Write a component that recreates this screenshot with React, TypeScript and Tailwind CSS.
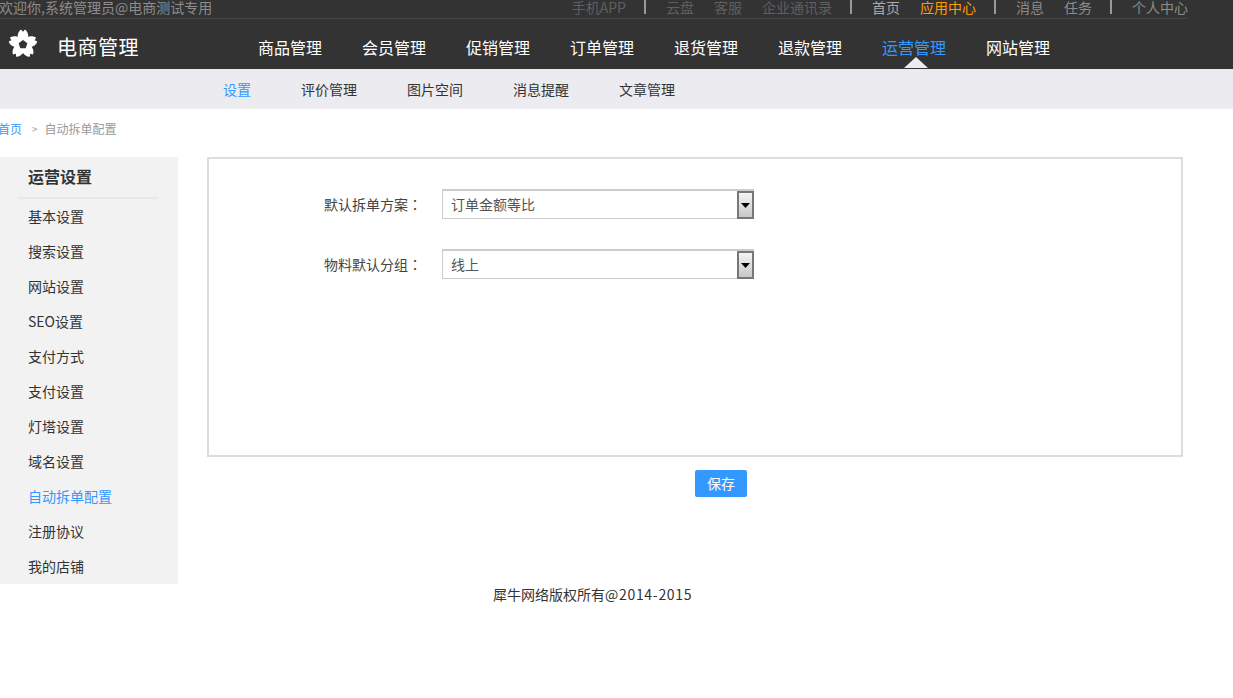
import React from "react";

const FONT = '"Noto Sans CJK SC", "Liberation Sans", sans-serif';

function Flower() {
  return (
    <svg width="30" height="30" viewBox="-15 -15 30 30" className="shrink-0">
      {[0, 72, 144, 216, 288].map((a) => (
        <g key={a} transform={`rotate(${a})`}>
          <path d="M0 -1 L-5 -5 C-6 -9 -4.6 -12.6 -2 -14.4 L0 -12.2 L2 -14.4 C4.6 -12.6 6 -9 5 -5 Z" fill="#fff" />
        </g>
      ))}
      <path d="M0 -4.6 L4.4 -1.4 L2.7 3.7 L-2.7 3.7 L-4.4 -1.4 Z" fill="#333" transform="translate(0 0.6)" />
    </svg>
  );
}

function Sep() {
  return <span className="w-[2px] h-[14px] -ml-[2px] bg-[#999]" />;
}

function Field({ label, value }: { label: string; value: string }) {
  return (
    <div className="flex items-center h-[30px]">
      <span className="w-[233px] pr-[20px] text-right text-[14px] text-[#444] whitespace-pre">
        {label}
        <span style={{ fontFamily: '"Noto Sans CJK TC", sans-serif' }}>：</span>
      </span>
      <div className="flex w-[312px] h-[30px] border border-t-2 border-r-0 border-[#ccc] bg-white">
        <span className="flex-1 pl-[8px] text-[14px] leading-[26px] text-[#555]">{value}</span>
        <span className="w-[17px] h-[28px] border-2 border-[#777] bg-gradient-to-b from-[#f4f4f4] to-[#c8c8c8] flex items-center justify-center">
          <svg width="9" height="5" viewBox="0 0 9 5"><path d="M0 0H9L4.5 5Z" fill="#000" /></svg>
        </span>
      </div>
    </div>
  );
}

const mainNav = ["商品管理", "会员管理", "促销管理", "订单管理", "退货管理", "退款管理", "运营管理", "网站管理"];
const subNav = ["设置", "评价管理", "图片空间", "消息提醒", "文章管理"];
const side = ["基本设置", "搜索设置", "网站设置", "SEO设置", "支付方式", "支付设置", "灯塔设置", "域名设置", "自动拆单配置", "注册协议", "我的店铺"];

export default function App() {
  return (
    <div className="min-h-[698px] bg-white overflow-hidden" style={{ fontFamily: FONT }}>
      <header className="bg-[#333] h-[69px]">
        <div className="w-[1188px] h-[19px] border-b border-[#454545] flex items-start justify-between text-[14px] leading-[14px]">
          <span className="-ml-[1px] text-[#8c8c8c]">欢迎你,系统管理员@电商测试专用</span>
          <div className="flex items-start gap-[20px] h-[14px]">
            <span className="text-[#5f5f5f]">手机APP</span>
            <Sep />
            <span className="text-[#5f5f5f]">云盘</span>
            <span className="text-[#5f5f5f]">客服</span>
            <span className="text-[#5f5f5f]">企业通讯录</span>
            <Sep />
            <span className="text-[#aaa]">首页</span>
            <span className="text-[#f90]">应用中心</span>
            <Sep />
            <span className="text-[#8c8c8c]">消息</span>
            <span className="text-[#8c8c8c]">任务</span>
            <Sep />
            <span className="text-[#8c8c8c]">个人中心</span>
          </div>
        </div>
        <div className="flex items-center h-[50px]">
          <div className="w-[258px] flex items-center pl-[8px]">
            <Flower />
            <span className="ml-[19px] text-[20px] leading-[28px] tracking-[0.5px] text-white mt-[5px]">电商管理</span>
          </div>
          <nav className="flex gap-[40px] mt-[5px]">
            {mainNav.map((n) => (
              <span key={n} className={`relative text-[16px] leading-[22px] ${n === "运营管理" ? "text-[#39f]" : "text-white"}`}>
                {n}
                {n === "运营管理" && (
                  <span className="absolute left-[22px] top-[21px] w-0 h-0 border-x-[12px] border-x-transparent border-b-[11px] border-b-[#ebebf0]" />
                )}
              </span>
            ))}
          </nav>
        </div>
      </header>
      <div className="h-[40px] bg-[#ebebf0] pl-[223px] flex items-center gap-[50px] text-[14px]">
        {subNav.map((n, i) => (
          <span key={n} className={i === 0 ? "text-[#39f]" : "text-[#333]"}>{n}</span>
        ))}
      </div>
      <div className="h-[48px] flex items-start text-[12px] leading-[18px] -ml-[2px] pt-[11px] text-[#999]">
        <span className="text-[#39f]">首页</span>
        <span className="ml-[10px] mr-[7px] text-[10px]">&gt;</span>
        <span>自动拆单配置</span>
      </div>
      <div className="flex items-start">
        <aside className="w-[178px] h-[427px] bg-[#f2f2f2] shrink-0 pl-[18px] pr-[20px]">
          <div className="h-[42px] border-b-2 border-[#e8e8e8] pl-[10px] text-[16px] font-bold leading-[38px] text-[#333]">运营设置</div>
          <ul className="pl-[10px] text-[14px] text-[#333]">
            {side.map((s) => (
              <li key={s} className={`h-[35px] leading-[34px] ${s === "自动拆单配置" ? "text-[#39f]" : ""}`}>{s}</li>
            ))}
          </ul>
        </aside>
        <main className="ml-[29px] w-[976px]">
          <div className="h-[300px] border-2 border-[#ddd] pt-[30px] flex flex-col gap-[30px]">
            <Field label="默认拆单方案" value="订单金额等比" />
            <Field label="物料默认分组" value="线上" />
          </div>
          <div className="mt-[13px] pl-[488px]">
            <button className="w-[52px] h-[27px] bg-[#39f] rounded-[2px] text-white text-[14px]">保存</button>
          </div>
        </main>
      </div>
      <footer className="pl-[493px] text-[14px] leading-[20px] text-[#333]">
        犀牛网络版权所有<span className="tracking-[0.7px]">@2014-2015</span>
      </footer>
    </div>
  );
}
